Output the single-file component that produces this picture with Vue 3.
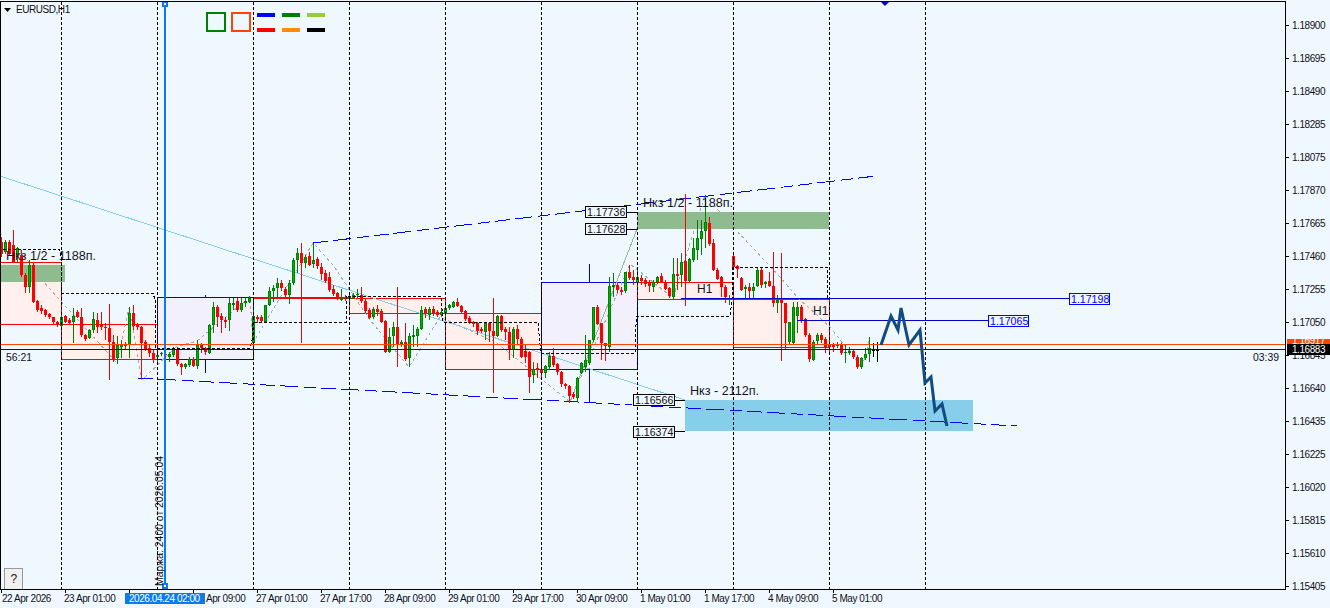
<template>
  <div class="terminal">
    <svg class="chart" width="1286" height="590" viewBox="0 0 1286 590">
      <!-- daily range boxes -->
      <rect v-for="b in boxes" :key="b.x" class="box" :class="b.kind" :x="b.x + 0.5" :y="b.y + 0.5" :width="b.w" :height="b.h" />
      <line v-for="t in boxTicks" :key="t.join()" class="tick-blue" :x1="t[0] + 0.5" :x2="t[0] + 0.5" :y1="t[1]" :y2="t[2]" />
      <line class="line-red-bold" x1="253" y1="298" x2="349" y2="298" />

      <!-- supply / demand zones -->
      <rect class="zone-green" x="0" y="265" width="65" height="17" />
      <rect class="zone-green" x="637" y="212" width="192" height="17" />
      <rect class="zone-blue" x="685" y="400" width="288" height="31" />

      <!-- zigzag and trend lines -->
      <polyline class="zigzag" :points="zigzag" />
      <line class="trend-sky" x1="0" y1="176" x2="685" y2="400" />
      <line class="trend-green" x1="570" y1="402" x2="637" y2="229" />
      <line class="channel" x1="313" y1="243" x2="876" y2="176" />
      <line class="channel" x1="138" y1="378" x2="1017" y2="426" />

      <!-- candles -->
      <g v-for="c in candles" :key="c.x" :class="`candle candle--${c.tone}`">
        <line class="candle__wick" :x1="c.x + 0.5" :x2="c.x + 0.5" :y1="c.hi" :y2="c.lo" />
        <rect class="candle__body" :x="c.x - 1" :y="c.top" width="3" :height="c.h" />
        <rect v-if="c.h > 2" class="candle__core" :x="c.x" :y="c.top + 1" width="1" :height="c.h - 2" />
      </g>

      <polyline class="steps" :points="steps" />

      <line v-for="x in separators" :key="x" class="separator" :x1="x + 0.5" :x2="x + 0.5" y1="2" y2="589" />

      <!-- price levels -->
      <line class="level-orange" x1="0" y1="344.5" x2="1285" y2="344.5" />
      <line class="level-blue" x1="0" y1="349.5" x2="1285" y2="349.5" />
      <line class="level-blue" x1="681" y1="298.5" x2="1069" y2="298.5" />
      <line class="level-blue" x1="797" y1="320.5" x2="988" y2="320.5" />

      <g v-for="l in blueTags" :key="l.text">
        <rect class="tag tag--blue" :x="l.x + 0.5" :y="l.y + 0.5" width="40" height="11" />
        <text class="tag-text tag-text--blue" :x="l.x + 2" :y="l.y + 9.5">{{ l.text }}</text>
      </g>

      <g v-for="l in zoneTags" :key="l.text">
        <line class="tag-lead" :x1="l.x + 41" :x2="l.to" :y1="l.lead" :y2="l.lead" />
        <rect class="tag" :x="l.x + 0.5" :y="l.y + 0.5" width="41" height="11" />
        <text class="tag-text" :x="l.x + 2" :y="l.y + 9.5">{{ l.text }}</text>
      </g>

      <text class="note" x="6" y="260">Нкз 1/2 - 1188п.</text>
      <text class="note" x="643" y="207">Нкз 1/2 - 1188п.</text>
      <text class="note" x="690" y="395">Нкз - 2112п.</text>
      <text class="note note--h1" x="697" y="293">H1</text>
      <text class="note note--h1" x="813" y="315">H1</text>

      <polyline class="forecast" points="881,345 891,316 898,330 901,308 909,345 920,330 925,383 931,377 935,411 942,404 947,426" />

      <!-- vertical marker with its handles -->
      <line class="marker" x1="165" y1="2" x2="165" y2="588" />
      <rect class="marker__handle" x="163" y="2" width="4" height="4" />
      <rect class="marker__handle" x="163" y="584" width="4" height="4" />
      <text class="clock" transform="translate(163 586) rotate(-90)">Маржа: 2400  от  2026.05.04</text>

      <polygon class="arrow-top" points="880,1 890,1 885,6" />

      <!-- palette -->
      <rect class="swatch swatch--green" x="207" y="13" width="18" height="18" />
      <rect class="swatch swatch--orange" x="232" y="13" width="18" height="18" />
      <rect v-for="d in dashes" :key="d.color" :x="d.x" :y="d.y" width="18" height="4" :fill="d.color" />

      <polygon points="4,8 11,8 7.5,12" />
      <text class="small" x="16" y="13">EURUSD,H1</text>
      <text class="clock" x="6" y="361">56:21</text>
      <text class="clock" x="1253" y="361">03:39</text>

      <rect class="help" x="4.5" y="568.5" width="18" height="21" rx="1" />
      <text class="help__mark" x="10.5" y="583">?</text>

      <path class="frame" d="M.5 589.5V1.5H1285.5V589.5H.5" />
    </svg>

    <svg class="price-axis" width="44" height="608" viewBox="0 0 44 608">
      <g v-for="p in prices" :key="p.text">
        <line class="axis-tick" x1="0" x2="3" :y1="p.y + 0.5" :y2="p.y + 0.5" />
        <text class="small" x="6" :y="p.y + 4">{{ p.text }}</text>
      </g>
      <rect class="tag-fill tag-fill--orange" x="1" y="339" width="43" height="6" />
      <text class="small small--white" x="6" y="344">1.16917</text>
      <rect class="tag-fill" x="1" y="344" width="43" height="11" />
      <text class="small small--white" x="6" y="353">1.16883</text>
    </svg>

    <svg class="time-axis" width="1286" height="18" viewBox="0 0 1286 18">
      <line v-for="x in timeTicks" :key="x" class="axis-tick" :x1="x + 0.5" :x2="x + 0.5" y1="0" y2="3" />
      <text v-for="t in times" :key="t.text" class="small" :x="t.x" y="12">{{ t.text }}</text>
      <rect class="time-cursor" x="125" y="3" width="80" height="11" />
      <text class="small small--white" x="129" y="12">2026.04.24 02:00</text>
    </svg>
  </div>
</template>

<script setup>
// y values below are read off 3x crops, so y = base + v / 3
const bull = 'g'
const bear = 'r'
const flat = 'k'

function expand(startX, base, rows) {
  return rows.map(([tone, hi, top, bot, lo], i) => ({
    x: startX + i * 4,
    tone,
    hi: base + hi / 3,
    lo: base + lo / 3,
    top: Math.round(base + top / 3),
    h: Math.max(1, Math.round((bot - top) / 3)),
  }))
}

const candles = [
  ...expand(1, 230, [
    [bear, 20, 35, 70, 80], [bull, 30, 35, 65, 72], [bear, 30, 35, 70, 78], [bear, 0, 45, 95, 100], [bull, 50, 55, 75, 95],
    [bear, 60, 75, 135, 140], [bear, 130, 135, 170, 188], [bull, 90, 105, 170, 190], [bear, 95, 105, 215, 218], [bear, 210, 213, 240, 245],
    [bear, 225, 235, 243, 252], [bear, 238, 240, 255, 262], [bear, 248, 252, 262, 268], [bear, 260, 262, 278, 282], [bear, 272, 277, 282, 292],
    [bull, 258, 262, 288, 292], [bear, 255, 258, 275, 280], [bear, 265, 270, 280, 285], [bull, 235, 258, 275, 340], [bear, 240, 245, 260, 265],
    [bear, 235, 260, 315, 320], [bear, 312, 315, 328, 332], [bull, 298, 300, 325, 328], [bull, 245, 268, 302, 310], [bear, 250, 270, 290, 310],
    [bear, 245, 282, 292, 300], [bear, 280, 292, 296, 330], [bear, 222, 293, 335, 450], [bear, 315, 335, 388, 395], [bull, 318, 345, 385, 402],
    [bull, 330, 342, 350, 385], [bear, 335, 345, 348, 360], [bull, 230, 248, 345, 385], [bear, 225, 250, 290, 300], [bear, 278, 282, 292, 300],
    [bear, 288, 292, 340, 445], [bear, 330, 337, 358, 362], [bear, 345, 355, 370, 380], [bear, 360, 368, 390, 398], [bull, 372, 375, 382, 405],
    [bull, 365, 370, 373, 378], [bear, 368, 372, 375, 380], [bull, 365, 373, 383, 395], [bull, 352, 358, 375, 380], [bear, 352, 357, 402, 408],
    [bear, 400, 402, 410, 435], [bull, 398, 402, 410, 418], [bull, 382, 388, 405, 412], [bear, 382, 388, 408, 412], [bull, 330, 345, 407, 418],
    [bear, 340, 345, 355, 370], [bear, 350, 355, 368, 375], [bull, 282, 285, 368, 372], [bull, 215, 232, 285, 308], [bear, 225, 232, 262, 290],
    [bear, 250, 258, 270, 310], [bear, 262, 270, 275, 295], [bull, 205, 220, 272, 302], [bull, 205, 218, 225, 240], [bear, 205, 212, 240, 245],
    [bull, 205, 218, 240, 245], [bull, 205, 213, 218, 230], [bull, 198, 203, 215, 220], [bull, 240, 258, 340, 345], [bear, 255, 262, 268, 280],
    [bear, 255, 262, 275, 280], [bull, 225, 225, 277, 280], [bull, 170, 183, 225, 228], [bull, 165, 175, 183, 215], [bull, 145, 160, 175, 205],
    [bear, 150, 160, 175, 182], [bear, 170, 178, 195, 200], [bull, 150, 160, 197, 222], [bull, 85, 90, 160, 165], [bull, 55, 70, 90, 130],
    [bear, 40, 70, 100, 338], [bull, 75, 82, 100, 115], [bear, 65, 78, 105, 108], [bull, 40, 90, 102, 115], [bear, 80, 88, 110, 118],
    [bear, 100, 110, 130, 150], [bear, 120, 130, 155, 160], [bear, 125, 140, 180, 185],
  ]),
  ...expand(333, 230, [
    [bear, 165, 178, 192, 198], [bear, 185, 190, 205, 210], [bull, 178, 203, 208, 212], [bear, 195, 203, 206, 212], [bull, 192, 197, 205, 210],
    [bull, 190, 195, 203, 208], [bull, 178, 193, 197, 205], [bear, 170, 195, 213, 218], [bear, 208, 212, 243, 248], [bear, 235, 240, 263, 268],
    [bull, 232, 238, 263, 268], [bear, 225, 237, 245, 258], [bear, 238, 243, 275, 278], [bear, 270, 273, 365, 368], [bull, 295, 320, 365, 370],
    [bull, 275, 292, 320, 350], [bear, 170, 292, 342, 410], [bull, 330, 335, 342, 350], [bear, 280, 335, 387, 392], [bull, 310, 318, 385, 410],
    [bull, 285, 315, 320, 350], [bull, 290, 297, 318, 350], [bull, 228, 240, 297, 300], [bear, 232, 238, 253, 265], [bull, 232, 238, 255, 270],
    [bear, 228, 238, 250, 258], [bear, 240, 247, 257, 262], [bull, 238, 245, 255, 260], [bull, 228, 235, 250, 258], [bull, 222, 225, 235, 240],
    [bull, 212, 217, 232, 235], [bear, 205, 217, 228, 232], [bear, 225, 227, 245, 250], [bear, 240, 243, 268, 272], [bear, 258, 263, 278, 282],
    [bear, 272, 275, 282, 290], [bear, 275, 280, 303, 315], [bear, 292, 298, 305, 310], [bull, 275, 278, 305, 330], [bear, 275, 278, 303, 335],
    [bear, 205, 303, 318, 490], [bull, 255, 258, 318, 322], [bear, 255, 258, 300, 305], [bear, 292, 298, 308, 330], [bear, 290, 305, 360, 390],
    [bull, 290, 298, 360, 385], [bear, 285, 297, 327, 345], [bear, 320, 327, 380, 385], [bear, 345, 362, 380, 400], [bear, 362, 366, 440, 490],
    [bull, 395, 418, 437, 460], [bear, 400, 415, 418, 445], [bear, 410, 417, 428, 450], [bull, 405, 408, 430, 445], [bull, 365, 378, 410, 420],
    [bear, 355, 377, 405, 410], [bear, 398, 403, 428, 435], [bear, 422, 427, 463, 470], [bear, 458, 463, 470, 478], [bear, 465, 468, 497, 520],
    [bear, 485, 492, 500, 508], [bull, 440, 445, 505, 512],
  ]),
  ...expand(581, 170, [
    [bull, 575, 580, 610, 612], [bull, 495, 570, 590, 605], [bull, 510, 510, 580, 585], [bull, 410, 410, 510, 515], [bear, 405, 410, 462, 465],
    [bear, 460, 460, 520, 570], [bear, 518, 520, 530, 572], [bull, 320, 348, 530, 545], [bull, 310, 345, 350, 380], [bear, 335, 345, 360, 368],
    [bear, 350, 360, 365, 375], [bull, 305, 307, 365, 368], [bear, 285, 307, 325, 330], [bear, 300, 322, 330, 345], [bull, 290, 322, 340, 345],
    [bear, 315, 325, 335, 345], [bear, 325, 330, 342, 350], [bear, 330, 340, 350, 365], [bull, 330, 335, 350, 365], [bull, 318, 322, 337, 342],
    [bear, 310, 318, 337, 340], [bear, 330, 335, 357, 360], [bear, 350, 355, 378, 385], [bull, 265, 312, 380, 390], [bear, 265, 312, 318, 360],
    [bull, 250, 275, 315, 350], [bear, 72, 273, 333, 408], [bull, 265, 267, 333, 335], [bull, 205, 235, 270, 275], [bull, 150, 205, 240, 270],
    [bull, 150, 183, 208, 255], [bull, 75, 157, 185, 235], [bear, 140, 160, 222, 228], [bear, 208, 220, 300, 302], [bear, 295, 300, 327, 330],
    [bear, 318, 322, 353, 380], [bear, 345, 350, 380, 400], [bull, 375, 385, 390, 405], [bear, 245, 258, 290, 300], [bear, 285, 288, 297, 325],
    [bear, 320, 325, 360, 362], [bull, 345, 352, 358, 385], [bear, 340, 350, 362, 385], [bull, 340, 350, 362, 385], [bull, 295, 300, 347, 350],
    [bear, 295, 300, 345, 355], [bull, 332, 337, 343, 355], [bear, 305, 333, 347, 352], [bear, 245, 347, 398, 410], [bull, 375, 390, 398, 430],
    [bear, 248, 390, 400, 572], [bear, 398, 400, 460, 540], [bull, 455, 457, 518, 522], [bull, 395, 410, 518, 525], [bull, 395, 412, 440, 490],
    [bear, 405, 410, 450, 460], [bear, 445, 448, 495, 500], [bear, 490, 495, 568, 575], [bull, 510, 515, 568, 572], [bull, 490, 495, 512, 525],
    [bear, 488, 495, 510, 520], [bear, 500, 508, 532, 550], [bear, 500, 525, 530, 550], [bear, 518, 522, 530, 545], [bull, 515, 522, 528, 535],
    [bear, 518, 522, 550, 555], [bull, 525, 545, 547, 580], [bull, 530, 542, 547, 555], [bear, 540, 543, 562, 568], [bear, 555, 562, 592, 596],
    [bull, 562, 565, 592, 596], [bull, 535, 552, 565, 570], [bull, 500, 535, 552, 575], [flat, 520, 540, 541, 560], [flat, 515, 540, 541, 575],
  ]),
]

const boxes = [
  { x: -1, y: 262, w: 62, h: 62, kind: 'box--red' },
  { x: 61, y: 324, w: 96, h: 35, kind: 'box--red' },
  { x: 157, y: 297, w: 96, h: 62, kind: 'box--blue' },
  { x: 349, y: 298, w: 96, h: 15, kind: 'box--red' },
  { x: 445, y: 313, w: 96, h: 56, kind: 'box--red' },
  { x: 541, y: 282, w: 96, h: 87, kind: 'box--blue' },
  { x: 637, y: 282, w: 96, h: 17, kind: 'box--red' },
  { x: 733, y: 299, w: 96, h: 48, kind: 'box--red' },
]

const boxTicks = [
  [205, 295, 297],
  [205, 359, 373],
  [589, 264, 282],
  [589, 369, 402],
]

const zigzag = '20,250 40,278 117,363 129,308 142,380 176,347 197,341 250,297 253,343 313,243 333,265 370,320 409,367 440,317 497,343 570,402 630,264 673,298 705,195 733,227 753,248 780,277 797,297 830,327 862,368 870,337'
const steps = '3,249 59,249 61,256 61,293 153,293 155,300 155,348 250,348 252,340 253,322 346,322 346,296 441,296 443,322 538,322 540,345 541,353 635,353 636,325 637,316 730,316 732,300 733,267 827,267 828,299'

const separators = [61, 157, 253, 349, 445, 541, 637, 733, 829, 925]

const dashes = [
  { x: 257, y: 13, color: '#0000ff' },
  { x: 282, y: 13, color: '#008000' },
  { x: 307, y: 13, color: '#9acd32' },
  { x: 257, y: 28, color: '#ff0000' },
  { x: 282, y: 28, color: '#ff8c00' },
  { x: 307, y: 28, color: '#000000' },
]

const blueTags = [
  { x: 1069, y: 293, text: '1.17198' },
  { x: 988, y: 315, text: '1.17065' },
]

const zoneTags = [
  { x: 585, y: 206, lead: 212.5, to: 637, text: '1.17736' },
  { x: 585, y: 223, lead: 229.5, to: 637, text: '1.17628' },
  { x: 633, y: 394, lead: 400.5, to: 685, text: '1.16566' },
  { x: 633, y: 426, lead: 431.5, to: 685, text: '1.16374' },
]

const priceLabels = ['1.18900', '1.18695', '1.18490', '1.18285', '1.18075', '1.17870', '1.17665', '1.17460', '1.17255',
  '1.17050', '1.16845', '1.16640', '1.16435', '1.16225', '1.16020', '1.15815', '1.15610', '1.15405']
const prices = priceLabels.map((text, i) => ({ text, y: 25 + i * 33 }))

const timeTicks = Array.from({ length: 14 }, (_, i) => 1 + i * 64)
const times = [
  { x: 2, text: '22 Apr 2026' },
  { x: 64, text: '23 Apr 01:00' },
  { x: 206, text: 'Apr 09:00' },
  { x: 256, text: '27 Apr 01:00' },
  { x: 320, text: '27 Apr 17:00' },
  { x: 384, text: '28 Apr 09:00' },
  { x: 448, text: '29 Apr 01:00' },
  { x: 512, text: '29 Apr 17:00' },
  { x: 576, text: '30 Apr 09:00' },
  { x: 640, text: '1 May 01:00' },
  { x: 704, text: '1 May 17:00' },
  { x: 768, text: '4 May 09:00' },
  { x: 832, text: '5 May 01:00' },
]
</script>

<style scoped>
.terminal {
  display: grid;
  grid-template-columns: 1286px 44px;
  grid-template-rows: 590px 18px;
  width: 1330px;
  height: 608px;
  overflow: hidden;
  background: #f0f8ff;
  font-family: "Liberation Sans", Arial, sans-serif;
}

svg {
  display: block;
}

.price-axis {
  grid-column: 2;
  grid-row: 1 / 3;
}

.time-axis {
  grid-column: 1;
  grid-row: 2;
}

.small {
  font-size: 10px;
  letter-spacing: -0.45px;
  fill: #101018;
}

.small--white { fill: #ffffff; }

.clock {
  font-size: 10.4px;
  fill: #101018;
  white-space: pre;
}

.tag-text {
  font-size: 10.6px;
  fill: #101018;
}

.tag-text--blue { fill: #0000ff; }

.note {
  font-size: 12.6px;
  fill: #14141e;
}

.note--h1 {
  font-size: 12px;
}

.box {
  stroke-width: 1;
  shape-rendering: crispEdges;
}

.box--red { fill: #fff0ee; stroke: #ff0000; }
.box--blue { fill: #f2f0fd; stroke: #0000e0; }

.tick-blue {
  stroke: #0000e0;
  shape-rendering: crispEdges;
}

.line-red-bold {
  stroke: #ff0000;
  stroke-width: 2;
  shape-rendering: crispEdges;
}

.zone-green { fill: #8fbc8f; }
.zone-blue { fill: #87ceeb; }

.zigzag {
  fill: none;
  stroke: #a9a9a9;
  stroke-width: 1;
  stroke-dasharray: 3 3;
  shape-rendering: crispEdges;
}

.trend-sky { stroke: #87ceeb; stroke-width: 1; shape-rendering: crispEdges; }
.trend-green { stroke: #8fbc8f; stroke-width: 1; shape-rendering: crispEdges; }

.channel {
  stroke: #0000ff;
  stroke-width: 1;
  stroke-dasharray: 15 5 18 6 12 5;
  shape-rendering: crispEdges;
}

.candle line,
.candle rect {
  shape-rendering: crispEdges;
}

.candle--r .candle__wick { stroke: #ff0000; }
.candle--r .candle__body,
.candle--r .candle__core { fill: #ff0000; }
.candle--g .candle__wick { stroke: #008000; }
.candle--g .candle__body { fill: #008000; }
.candle--g .candle__core { fill: #00b400; }
.candle--k .candle__wick { stroke: #000000; }
.candle--k .candle__body,
.candle--k .candle__core { fill: #000000; }

.steps {
  fill: none;
  stroke: #000000;
  stroke-width: 1;
  stroke-dasharray: 3 2;
  shape-rendering: crispEdges;
}

.separator {
  stroke: #000000;
  stroke-width: 1;
  stroke-dasharray: 3 2;
  shape-rendering: crispEdges;
}

.level-orange { stroke: #ff4500; shape-rendering: crispEdges; }
.level-blue { stroke: #0000cd; shape-rendering: crispEdges; }

.tag {
  fill: #f0f8ff;
  stroke: #000000;
  shape-rendering: crispEdges;
}

.tag--blue { stroke: #0000ff; }

.tag-lead {
  stroke: #000000;
  shape-rendering: crispEdges;
}

.forecast {
  fill: none;
  stroke: #114b7f;
  stroke-width: 3;
  stroke-linejoin: miter;
}

.marker {
  stroke: #0a7be8;
  stroke-width: 2;
  shape-rendering: crispEdges;
}

.marker__handle {
  fill: #ffffff;
  stroke: #0a7be8;
  stroke-width: 2;
  shape-rendering: crispEdges;
}

.arrow-top { fill: #0000cd; }

.swatch {
  fill: none;
  stroke-width: 2;
  shape-rendering: crispEdges;
}

.swatch--green { stroke: #008000; }
.swatch--orange { stroke: #ff4500; }

.help {
  fill: #f0f0f0;
  stroke: #999999;
  shape-rendering: crispEdges;
}

.help__mark {
  font-size: 12px;
  fill: #202020;
}

.frame {
  fill: none;
  stroke: #000000;
  shape-rendering: crispEdges;
}

.axis-tick {
  stroke: #000000;
  shape-rendering: crispEdges;
}

.tag-fill { fill: #000000; }
.tag-fill--orange { fill: #ff4500; }
.time-cursor { fill: #0a7be8; }
</style>
